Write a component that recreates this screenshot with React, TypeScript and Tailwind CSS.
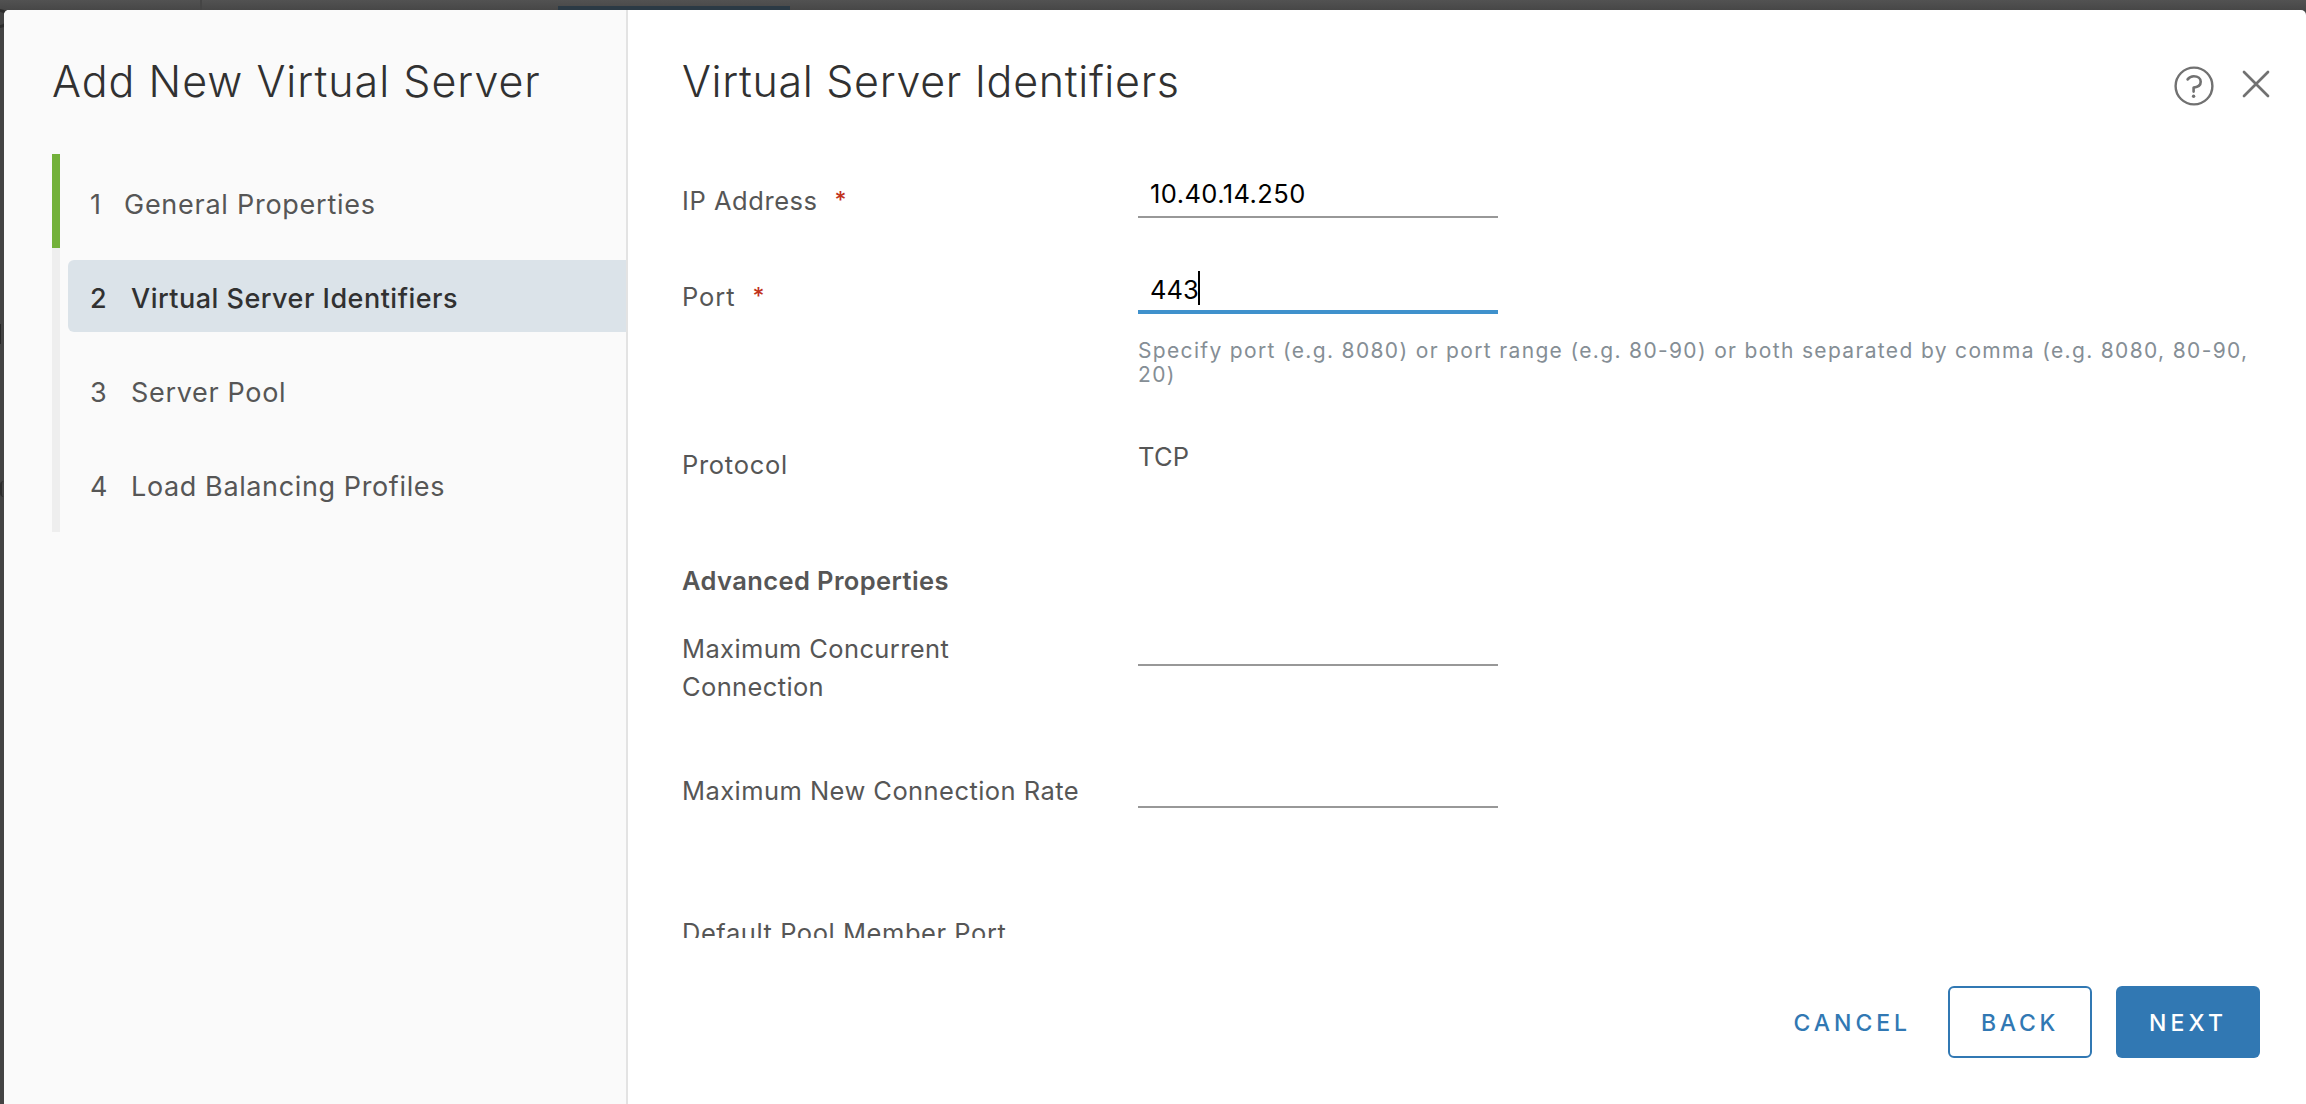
import type { ReactNode } from "react";

const steps = [
  { n: "1", label: "General Properties", gap: "w-[34px]", tracking: "tracking-[0.74px]" },
  { n: "2", label: "Virtual Server Identifiers", gap: "w-[41px]", tracking: "tracking-[0.486px]" },
  { n: "3", label: "Server Pool", gap: "w-[41px]", tracking: "tracking-[0.68px]" },
  { n: "4", label: "Load Balancing Profiles", gap: "w-[41px]", tracking: "tracking-[0.62px]" },
];

const ACTIVE = 1;

function Sidebar() {
  return (
    <aside className="flex w-[624px] shrink-0 flex-col border-r-2 border-[#e3e3e3] bg-[#fafafa] pt-[45px] pl-12">
      <h1 className="h-[52px] text-[43px] leading-[52px] font-[350] tracking-[0.98px] whitespace-nowrap text-[#313131]">
        Add New Virtual Server
      </h1>
      <ol className="mt-[47px] flex flex-col">
        {steps.map((s, i) => (
          <li
            key={s.n}
            className={`flex h-[94px] border-l-8 pt-3 pl-2 last:h-24 ${i < ACTIVE ? "border-[#73b13a]" : "border-[#eeeeee]"}`}
          >
            <div
              className={`flex h-[72px] flex-1 items-center rounded-l-md pt-[6px] pl-[22px] text-[27px] whitespace-nowrap ${
                i === ACTIVE ? "bg-[#dbe3e9] font-medium text-[#313131]" : "text-[#565656]"
              }`}
            >
              <span className={s.gap}>{s.n}</span>
              <span className={s.tracking}>{s.label}</span>
            </div>
          </li>
        ))}
      </ol>
    </aside>
  );
}

function Row({
  label,
  tracking,
  required,
  className = "",
  children,
}: {
  label: string;
  tracking: string;
  required?: boolean;
  className?: string;
  children: ReactNode;
}) {
  return (
    <div className={`flex shrink-0 items-start ${className}`}>
      <div className="w-[456px] shrink-0 pt-3 pr-12">
        <div className="flex text-[25.5px] leading-[38px] text-[#565656]">
          <span className={tracking}>{label}</span>
          {required && <span className="-mt-px ml-[17px] text-[23px] font-medium text-[#c1311b]">*</span>}
        </div>
      </div>
      <div className="min-w-0 flex-1">{children}</div>
    </div>
  );
}

function Field({ value = "", tracking = "", focused = false }: { value?: string; tracking?: string; focused?: boolean }) {
  return (
    <div
      className={`flex h-12 w-[360px] items-center pl-3 text-[25.5px] text-black ${
        focused ? "border-b-4 border-[#3f91cc] pt-1" : "border-b-2 border-[#989898] pt-[2px]"
      }`}
    >
      <span className={tracking}>{value}</span>
      {focused && <span className="-mt-1 -ml-px h-[34px] w-[2px] bg-black" />}
    </div>
  );
}

function HelpIcon() {
  return (
    <svg width="40" height="40" viewBox="0 0 40 40" fill="none" stroke="#717171" strokeWidth="2.4">
      <circle cx="20" cy="20" r="18.4" />
      <path
        d="M13.6 13.4c1.5-2 3.6-3.1 6.2-3.1 4.1 0 6.9 2.1 6.9 5.5 0 3.4-2.7 5.4-7.1 5.8v4"
        strokeWidth="2.6"
        strokeLinecap="round"
        strokeLinejoin="round"
      />
      <circle cx="19.6" cy="30.2" r="1.7" fill="#717171" stroke="none" />
    </svg>
  );
}

function CloseIcon() {
  return (
    <svg width="28" height="28" viewBox="0 0 28 28" stroke="#717171" strokeWidth="2.7" strokeLinecap="round">
      <path d="M2 2l24 24M26 2L2 26" />
    </svg>
  );
}

export default function App() {
  return (
    <div className="relative flex h-[1104px] w-[2306px] flex-col overflow-hidden bg-[#434343] font-['Inter',sans-serif]">
      <header className="flex h-[10px] shrink-0 items-end bg-linear-to-b from-[#525252] to-[#474747]">
        <div className="h-full w-[200px]" />
        <div className="h-full w-[2px] bg-[#454545]" />
        <div className="h-full w-[356px]" />
        <div className="h-1 w-[232px] bg-[#2b3a45]" />
      </header>
      {/* Edges of the dimmed page content behind the dialog */}
      <div className="absolute top-[9px] -left-[9px] h-[19px] w-[18px] rounded-full border-[3px] border-[#2c2c2c]" />
      <div className="absolute top-[324px] left-0 h-5 w-px bg-[#262626]" />
      <div className="absolute top-[481px] left-0 h-4 w-1 rounded-l-full border-l-2 border-[#2c2c2c]" />
      <div className="relative flex min-h-0 flex-1 pl-1">
        <div className="flex min-w-0 flex-1 overflow-hidden rounded-t-[5px] bg-white">
          <Sidebar />
          <main className="flex min-w-0 flex-1 flex-col pt-11 pr-9 pl-[54px]">
            <div className="flex h-[52px] items-start justify-between">
              <h2 className="pt-px text-[43px] leading-[52px] font-[350] tracking-[0.66px] text-[#313131]">
                Virtual Server Identifiers
              </h2>
              <div className="flex items-start pt-3">
                <button className="mr-7">
                  <HelpIcon />
                </button>
                <button className="pt-1">
                  <CloseIcon />
                </button>
              </div>
            </div>

            <div className="mt-16 flex h-[768px] shrink-0 flex-col overflow-hidden">
              <Row label="IP Address" tracking="tracking-[0.55px]" required className="h-24">
                <Field value="10.40.14.250" tracking="tracking-[0.42px]" />
              </Row>
              <Row label="Port" tracking="tracking-[0.9px]" required className="h-[168px]">
                <Field value="443" focused />
                <p className="mt-[25px] text-[21px] leading-6 tracking-[1.34px] text-[#858e95]">
                  Specify port (e.g. 8080) or port range (e.g. 80-90) or both separated by comma (e.g. 8080, 80-90, 20)
                </p>
              </Row>
              <Row label="Protocol" tracking="tracking-[0.7px]" className="h-32">
                <span className="block text-[25.5px] leading-[46px] tracking-[0.2px] text-[#565656]">TCP</span>
              </Row>
              <h3 className="h-14 shrink-0 text-[25.5px] leading-[38px] font-semibold tracking-[0.39px] text-[#565656]">
                Advanced Properties
              </h3>
              <Row label="Maximum Concurrent Connection" tracking="tracking-[0.37px]" className="h-[142px]">
                <Field />
              </Row>
              <Row label="Maximum New Connection Rate" tracking="tracking-[0.44px] whitespace-nowrap" className="h-[142px]">
                <Field />
              </Row>
              <Row label="Default Pool Member Port" tracking="tracking-[0.55px]">
                <Field />
              </Row>
            </div>

            <div className="mt-12 flex h-[72px] shrink-0 justify-end pr-[10px] text-[23px] font-medium text-[#3178b3]">
              <button className="mr-[37px] pt-[3px] tracking-[3.939px]">CANCEL</button>
              <button className="mr-6 w-36 rounded-md border-2 border-[#3178b3] pt-[3px] tracking-[3.688px]">BACK</button>
              <button className="w-36 rounded-md bg-[#3178b3] pt-[3px] tracking-[4.176px] text-white">NEXT</button>
            </div>
          </main>
        </div>
      </div>
    </div>
  );
}
